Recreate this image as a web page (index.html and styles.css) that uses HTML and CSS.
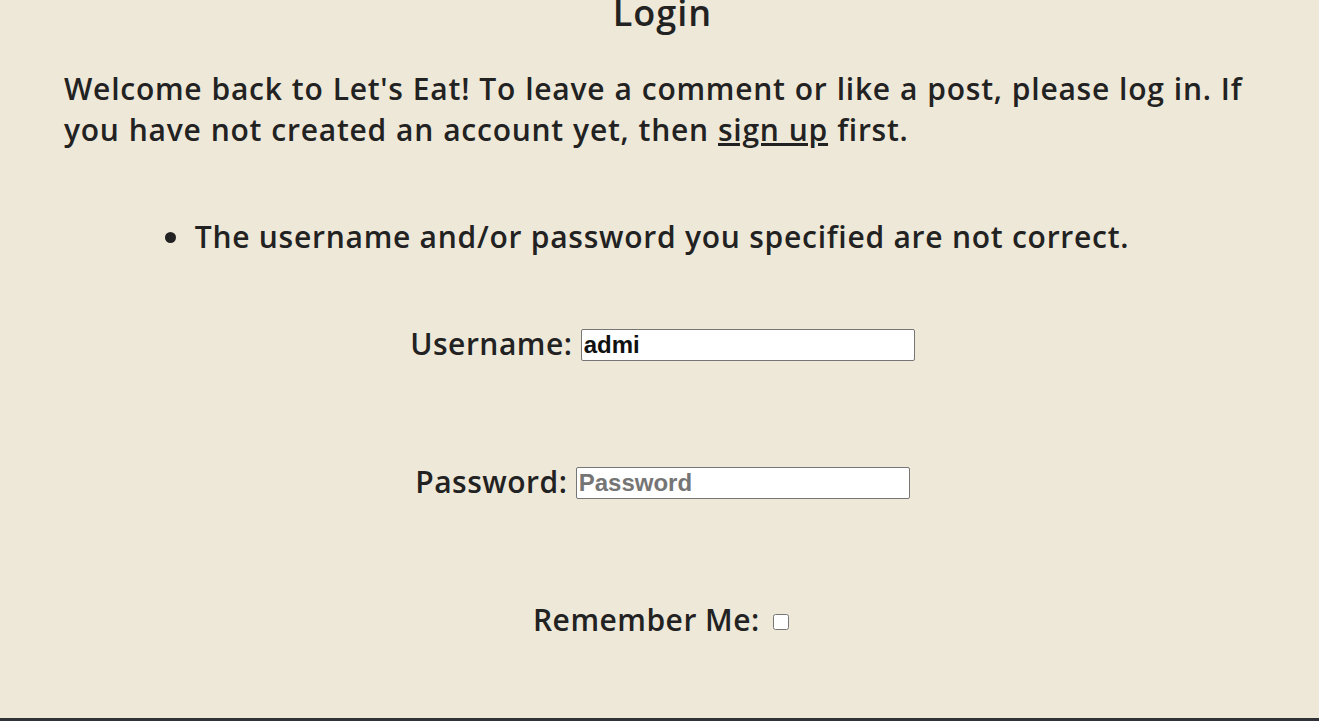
FILE: index.html
```html
<!DOCTYPE html>
<html>
<head>
<meta charset="utf-8">
<link rel="stylesheet" href="styles.css">
</head>
<body>
<main class="page">
  <h1 class="title">Login</h1>
  <p class="intro">Welcome back to Let's Eat! To leave a comment or like a post, please log in. If you have not created an account yet, then <a href="#" class="link">sign up</a> first.</p>
  <ul class="errors">
    <li class="error">The username and/or password you specified are not correct.</li>
  </ul>
  <form class="form">
    <p class="row"><label for="u">Username:</label> <input id="u" class="field" type="text" value="admi"></p>
    <p class="row row-pw"><label for="p">Password:</label> <input id="p" class="field" type="password" placeholder="Password"></p>
    <p class="row row-rem"><label for="r">Remember Me:</label> <input id="r" class="check" type="checkbox"></p>
  </form>
  <div class="bottom"></div>
</main>
</body>
</html>
```
FILE: styles.css
```css
html, body {
  margin: 0;
  padding: 0;
  background: #eee8d8;
  overflow: hidden;
  height: 721px;
}
body {
  font-family: "Open Sans", "Noto Sans", sans-serif;
  color: #222;
}
.page {
  display: flow-root;
  position: relative;
  height: 721px;
  padding: 0 64px 0 64px;
  box-sizing: border-box;
}
.title {
  margin: -12px 0 0 6px;
  text-align: center;
  font-size: 36px;
  font-weight: 600;
  letter-spacing: 1px;
  line-height: 1.4;
}
.intro {
  margin: 30px 0 0 0;
  font-size: 30px;
  line-height: 41px;
  font-weight: 600;
  letter-spacing: 0.75px;
  word-spacing: 0.6px;
}
.link {
  color: #222;
  text-decoration: underline;
}
.errors {
  margin: 66px 0 0 0;
  padding: 0;
  list-style: none;
  display: flex;
  justify-content: center;
  font-size: 30px;
  font-weight: 600;
  letter-spacing: 0.75px;
  line-height: 41px;
}
.error {
  display: flex;
  align-items: center;
  gap: 19px;
  padding-right: 25px;
}
.error::before {
  content: "";
  flex: none;
  width: 11px;
  height: 11px;
  border-radius: 50%;
  background: #222;
  margin-top: 2px;
}
.form {
  margin-top: 66px;
  padding-left: 6px;
}
.row {
  margin: 0;
  height: 138px;
  text-align: center;
  font-size: 30px;
  font-weight: 600;
  letter-spacing: 0.5px;
}
.field {
  width: 334px;
  height: 32px;
  box-sizing: border-box;
  border: 1px solid #767676;
  border-radius: 2px;
  font-family: "Liberation Sans", Arial, sans-serif;
  font-weight: bold;
  font-size: 24px;
  letter-spacing: 0;
  padding: 0 2px;
  color: #111;
  vertical-align: 2px;
}
.field::placeholder {
  color: #757575;
}
.check {
  width: 16px;
  height: 16px;
  margin: 0 3px 0 5px;
  vertical-align: 1px;
}
.bottom {
  position: absolute;
  left: 0;
  right: 0;
  bottom: 0;
  height: 3px;
  background: #2f3236;
}
```
